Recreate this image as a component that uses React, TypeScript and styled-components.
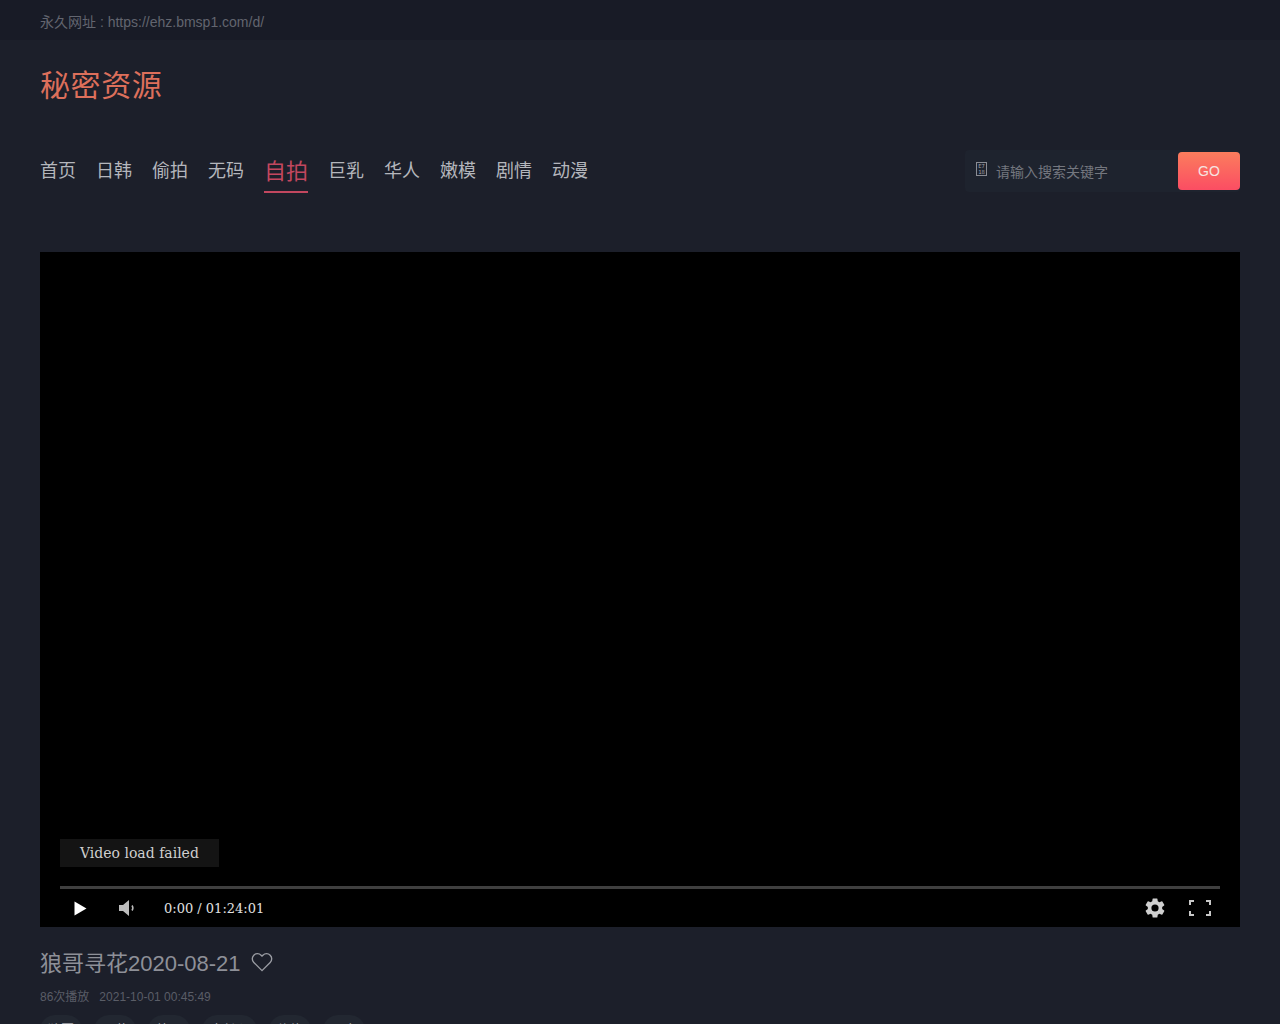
import React from "react";
import styled, { createGlobalStyle } from "styled-components";

const SANS = `"Liberation Sans", "Noto Sans CJK SC", sans-serif`;

const Global = createGlobalStyle`
  html, body { margin: 0; padding: 0; background: #1c1f2a; height: 1024px; overflow: hidden; }
  body { font-family: ${SANS}; }
`;

const TopBar = styled.div`
  height: 40px;
  box-sizing: border-box;
  background: #181b26;
  padding: 2px 40px 0;
  display: flex;
  align-items: center;
  font-size: 14px;
  color: #62656f;
`;

const Header = styled.header`
  height: 212px;
  padding: 0 40px;
  box-sizing: border-box;
  display: flex;
  flex-direction: column;
`;

const Logo = styled.h1`
  margin: 24px 0 0;
  height: 44px;
  line-height: 44px;
  font-size: 30px;
  font-weight: 400;
  letter-spacing: 0.6px;
  color: #dd6f5b;
`;

const NavRow = styled.div`
  margin-top: 33px;
  height: 60px;
  display: flex;
  align-items: center;
  justify-content: space-between;
`;

const Nav = styled.nav`
  display: flex;
  align-items: center;
  gap: 20px;
  margin-top: 2px;
`;

const NavItem = styled.a<{ $active?: boolean }>`
  display: block;
  height: 42px;
  line-height: 41px;
  box-sizing: border-box;
  font-size: ${(p) => (p.$active ? "22px" : "18px")};
  color: ${(p) => (p.$active ? "#c2475f" : "#b4b6bc")};
  border-bottom: 2px solid ${(p) => (p.$active ? "#c2475f" : "transparent")};
  white-space: nowrap;
`;

const Search = styled.form`
  margin: 0;
  display: flex;
  align-items: center;
  height: 42px;
  width: 275px;
  box-sizing: border-box;
  background: #1e232e;
  border-radius: 4px;
`;

const SearchGlyph = styled.svg`
  width: 11px;
  height: 14px;
  margin: -5px 9px 0 11px;
  flex: none;
`;

const SearchText = styled.span`
  flex: 1;
  font-size: 14px;
  color: #74777f;
`;

const GoButton = styled.button`
  width: 62px;
  height: 38px;
  border: 0;
  padding: 0;
  border-radius: 4px;
  background: linear-gradient(180deg, #fb7d5d 0%, #fb4d63 100%);
  color: #f6e4e0;
  font-family: ${SANS};
  font-size: 14px;
`;

const Main = styled.main`
  padding: 0 40px;
`;

const Player = styled.div`
  position: relative;
  height: 675px;
  background: #000;
`;

const Notice = styled.div`
  position: absolute;
  left: 20px;
  bottom: 60px;
  height: 28px;
  line-height: 28px;
  padding: 0 20px;
  background: #141414;
  color: #cfcfcf;
  font-family: "DejaVu Serif", serif;
  font-size: 14px;
`;

const Controls = styled.div`
  position: absolute;
  left: 20px;
  right: 20px;
  bottom: 0;
  height: 38px;
  border-top: 3px solid #3f3f3f;
  display: flex;
  align-items: center;
`;

const IconSlot = styled.span<{ $w: number }>`
  width: ${(p) => p.$w}px;
  height: 24px;
  display: flex;
  align-items: center;
  justify-content: center;
  flex: none;
`;

const Time = styled.span`
  font-family: "DejaVu Serif", serif;
  font-size: 13px;
  color: #e0e0e0;
  margin-left: 10px;
`;

const Spacer = styled.div`
  flex: 1;
`;

const Title = styled.h2`
  margin: 18px 0 0;
  display: flex;
  align-items: center;
  gap: 10px;
  height: 32px;
  font-size: 22px;
  font-weight: 400;
  color: #8e9098;
`;

const TitleHeart = styled.svg`
  margin-top: 2px;
  flex: none;
`;

const Meta = styled.div`
  margin-top: 12px;
  height: 16px;
  line-height: 16px;
  display: flex;
  gap: 10px;
  font-size: 12px;
  color: #5a5d67;
`;

const Tags = styled.div`
  margin-top: 10px;
  display: flex;
  gap: 12px;
`;

const Tag = styled.span`
  height: 30px;
  line-height: 30px;
  padding: 0 8px;
  border-radius: 15px;
  background: #222731;
  font-size: 13px;
  color: #a8aab0;
  white-space: nowrap;
`;

const navItems = ["首页", "日韩", "偷拍", "无码", "自拍", "巨乳", "华人", "嫩模", "剧情", "动漫"];
const tags = ["狼哥", "寻花", "外围", "大长腿", "约炮", "国产"];

export default function App() {
  return (
    <>
      <Global />
      <TopBar>永久网址 : https://ehz.bmsp1.com/d/</TopBar>
      <Header>
        <Logo>秘密资源</Logo>
        <NavRow>
          <Nav>
            {navItems.map((n) => (
              <NavItem key={n} $active={n === "自拍"}>{n}</NavItem>
            ))}
          </Nav>
          <Search>
            <SearchGlyph viewBox="0 0 11 14">
              <rect x="0.5" y="0.5" width="10" height="13" fill="none" stroke="#8a8c94" />
              <text x="5.5" y="6.4" textAnchor="middle" fontSize="5.5" fontFamily="DejaVu Sans Mono, monospace" fill="#a0a2a8">E7</text>
              <text x="5.5" y="12.2" textAnchor="middle" fontSize="5.5" fontFamily="DejaVu Sans Mono, monospace" fill="#a0a2a8">18</text>
            </SearchGlyph>
            <SearchText>请输入搜索关键字</SearchText>
            <GoButton type="button">GO</GoButton>
          </Search>
        </NavRow>
      </Header>
      <Main>
        <Player>
          <Notice>Video load failed</Notice>
          <Controls>
            <IconSlot $w={40}>
              <svg width="13" height="15" viewBox="0 0 13 15"><path d="M0.5 0.5v14l12-7z" fill="#fff" /></svg>
            </IconSlot>
            <IconSlot $w={54}>
              <svg width="18" height="18" viewBox="0 0 18 18">
                <path d="M1 6h4l6-5v16l-6-5H1z" fill="#bdbdbd" />
                <path d="M14 6.5q1.8 2.5 0 5" stroke="#bdbdbd" strokeWidth="1.5" fill="none" />
              </svg>
            </IconSlot>
            <Time>0:00 / 01:24:01</Time>
            <Spacer />
            <IconSlot $w={50}>
              <svg width="24" height="24" viewBox="0 0 24 24">
                <path fill="#cfcfcf" d="M19.14 12.94c.04-.3.06-.61.06-.94s-.02-.64-.07-.94l2.03-1.58a.49.49 0 0 0 .12-.61l-1.92-3.32a.49.49 0 0 0-.59-.22l-2.39.96a7 7 0 0 0-1.62-.94l-.36-2.54a.48.48 0 0 0-.48-.41h-3.84a.48.48 0 0 0-.48.41l-.36 2.54c-.59.24-1.13.56-1.62.94l-2.39-.96a.49.49 0 0 0-.59.22L2.72 8.87a.48.48 0 0 0 .12.61l2.03 1.58c-.05.3-.07.62-.07.94s.02.64.07.94l-2.03 1.58a.49.49 0 0 0-.12.61l1.92 3.32c.12.22.37.29.59.22l2.39-.96c.5.38 1.03.7 1.62.94l.36 2.54c.05.24.24.41.48.41h3.84c.24 0 .44-.17.47-.41l.36-2.54c.59-.24 1.13-.56 1.62-.94l2.39.96c.22.08.47 0 .59-.22l1.92-3.32a.48.48 0 0 0-.12-.61l-2.01-1.58zM12 15.6A3.6 3.6 0 1 1 12 8.4a3.6 3.6 0 0 1 0 7.2z" />
              </svg>
            </IconSlot>
            <IconSlot $w={40}>
              <svg width="22" height="16" viewBox="0 0 22 16" fill="none" stroke="#c8c8c8" strokeWidth="2">
                <path d="M1 5V1h4M17 1h4v4M21 11v4h-4M5 15H1v-4" />
              </svg>
            </IconSlot>
          </Controls>
        </Player>
        <Title>
          狼哥寻花2020-08-21
          <TitleHeart width="22" height="20" viewBox="0 0 24 22" fill="none" stroke="#9a9ca3" strokeWidth="1.5">
            <path d="M12 20.5 3 11.5a5.6 5.6 0 0 1 0-8 5.6 5.6 0 0 1 8 0l1 1 1-1a5.6 5.6 0 0 1 8 0 5.6 5.6 0 0 1 0 8z" />
          </TitleHeart>
        </Title>
        <Meta>
          <span>86次播放</span>
          <span>2021-10-01 00:45:49</span>
        </Meta>
        <Tags>
          {tags.map((t) => (
            <Tag key={t}>{t}</Tag>
          ))}
        </Tags>
      </Main>
    </>
  );
}
